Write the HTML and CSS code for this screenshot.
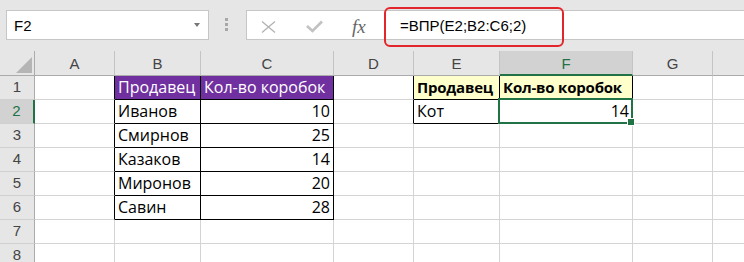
FILE: index.html
```html
<!DOCTYPE html>
<html lang="ru">
<head>
    <meta charset="UTF-8">
    <meta name="viewport" content="width=device-width, initial-scale=1.0">
    <title>ВПР</title>
    <link rel="stylesheet" href="styles.css">
</head>
<body>
    <div class="toolbar">
        <div class="namebox">
            <span class="name">F2</span>
            <span class="drop"></span>
        </div>
        <div class="grip"><i></i><i></i><i></i></div>
        <div class="formula">
            <svg class="ico-x" width="15" height="12" viewBox="0 0 15 12">
                <path d="M1 0.5 L14 11.5 M14 0.5 L1 11.5" stroke="#b0b0b0" stroke-width="1.2" fill="none"/>
            </svg>
            <svg class="ico-ok" width="17" height="13" viewBox="0 0 17 13">
                <path d="M1 6 L6.5 11 L16 1.5" stroke="#c2c2c2" stroke-width="2.6" fill="none"/>
            </svg>
            <span class="fx">fx</span>
            <span class="ftext">=ВПР(E2;B2:C6;2)</span>
            <div class="mark"></div>
        </div>
    </div>

    <div class="sheet">
        <!-- column headers -->
        <div class="c h corner">
            <svg width="16" height="16" viewBox="0 0 16 16"><polygon points="16,0 16,16 0,16" fill="#b5b5b5"/></svg>
        </div>
        <div class="c h">A</div>
        <div class="c h">B</div>
        <div class="c h">C</div>
        <div class="c h">D</div>
        <div class="c h">E</div>
        <div class="c h hsel">F</div>
        <div class="c h">G</div>
        <div class="c h"></div>

        <!-- row 1 -->
        <div class="c r">1</div>
        <div class="c bk-r"></div>
        <div class="c bk-r bk-b purple">Продавец</div>
        <div class="c bk-r bk-b purple">Кол-во коробок</div>
        <div class="c bk-r"></div>
        <div class="c bk-r bk-b yellow">Продавец</div>
        <div class="c bk-r bk-b yellow">Кол-во коробок</div>
        <div class="c"></div>
        <div class="c"></div>

        <!-- row 2 -->
        <div class="c r rsel">2</div>
        <div class="c bk-r"></div>
        <div class="c bk-r bk-b">Иванов</div>
        <div class="c bk-r bk-b num">10</div>
        <div class="c bk-r"></div>
        <div class="c bk-r bk-b">Кот</div>
        <div class="c bk-r bk-b num sel">14</div>
        <div class="c"></div>
        <div class="c"></div>

        <!-- row 3 -->
        <div class="c r">3</div>
        <div class="c bk-r"></div>
        <div class="c bk-r bk-b">Смирнов</div>
        <div class="c bk-r bk-b num">25</div>
        <div class="c"></div>
        <div class="c"></div>
        <div class="c"></div>
        <div class="c"></div>
        <div class="c"></div>

        <!-- row 4 -->
        <div class="c r">4</div>
        <div class="c bk-r"></div>
        <div class="c bk-r bk-b">Казаков</div>
        <div class="c bk-r bk-b num">14</div>
        <div class="c"></div>
        <div class="c"></div>
        <div class="c"></div>
        <div class="c"></div>
        <div class="c"></div>

        <!-- row 5 -->
        <div class="c r">5</div>
        <div class="c bk-r"></div>
        <div class="c bk-r bk-b">Миронов</div>
        <div class="c bk-r bk-b num">20</div>
        <div class="c"></div>
        <div class="c"></div>
        <div class="c"></div>
        <div class="c"></div>
        <div class="c"></div>

        <!-- row 6 -->
        <div class="c r">6</div>
        <div class="c bk-r"></div>
        <div class="c bk-r bk-b">Савин</div>
        <div class="c bk-r bk-b num">28</div>
        <div class="c"></div>
        <div class="c"></div>
        <div class="c"></div>
        <div class="c"></div>
        <div class="c"></div>

        <!-- row 7 -->
        <div class="c r">7</div>
        <div class="c"></div>
        <div class="c"></div>
        <div class="c"></div>
        <div class="c"></div>
        <div class="c"></div>
        <div class="c"></div>
        <div class="c"></div>
        <div class="c"></div>

        <!-- row 8 -->
        <div class="c r">8</div>
        <div class="c"></div>
        <div class="c"></div>
        <div class="c"></div>
        <div class="c"></div>
        <div class="c"></div>
        <div class="c"></div>
        <div class="c"></div>
        <div class="c"></div>
    </div>
</body>
</html>
```

FILE: styles.css
```css
body {
    margin: 0;
    height: 262px;
    overflow: hidden;
    background: #e6e6e6;
    font-family: "Liberation Sans", Arial, sans-serif;
    color: #000;
}

/* formula bar */
.toolbar {
    display: flex;
    align-items: flex-start;
    height: 51px;
    padding: 10px 0 0 6px;
    box-sizing: border-box;
}

.namebox {
    display: flex;
    align-items: center;
    justify-content: space-between;
    width: 203px;
    height: 30px;
    padding: 0 8px 0 7px;
    box-sizing: border-box;
    background: #fff;
    border: 1px solid #c6c6c6;
    font-size: 15px;
}

.drop {
    width: 0;
    height: 0;
    border-left: 3.5px solid transparent;
    border-right: 3.5px solid transparent;
    border-top: 4px solid #767676;
}

.grip {
    display: flex;
    flex-direction: column;
    gap: 2px;
    margin: 8px 0 0 16px;
}

.grip i {
    display: block;
    width: 3px;
    height: 3px;
    background: #a8a8a8;
}

.formula {
    position: relative;
    flex: 1;
    display: flex;
    align-items: center;
    height: 30px;
    margin-left: 18px;
    padding-top: 3px;
    box-sizing: border-box;
    background: #fff;
    border: 1px solid #c6c6c6;
    border-right: none;
}

.ico-x {
    margin-left: 14px;
}

.ico-ok {
    margin-left: 30px;
}

.fx {
    display: inline-block;
    width: 16px;
    margin-left: 29px;
    font-family: "Liberation Serif", "Times New Roman", serif;
    font-style: italic;
    font-size: 19px;
    color: #666;
}

.ftext {
    margin: -2px 0 0 32px;
    font-size: 15px;
}

.mark {
    position: absolute;
    left: 137px;
    top: -4px;
    width: 180px;
    height: 40px;
    box-sizing: border-box;
    border: 2px solid #e3262b;
    border-radius: 6px;
}

/* grid */
.sheet {
    display: grid;
    grid-template-columns: 35px 80px 86px 133px 80px 86px 133px 80px 80px;
    grid-template-rows: 25px repeat(8, 24px);
    overflow: hidden;
    background: #fff;
}

.c {
    box-sizing: border-box;
    border-right: 1px solid #d4d4d4;
    border-bottom: 1px solid #d4d4d4;
    padding: 0 3px;
    font-family: "Open Sans", "Liberation Sans", sans-serif;
    font-size: 16px;
    line-height: 23px;
    white-space: nowrap;
}

.h {
    background: #e6e6e6;
    border-right-color: #c4c4c4;
    border-bottom-color: #ababab;
    text-align: center;
    font-family: "Liberation Sans", Arial, sans-serif;
    font-size: 15px;
    color: #444;
    line-height: 26px;
}

.corner {
    display: flex;
    align-items: flex-end;
    justify-content: flex-end;
    padding: 0 2px 2px 0;
    border-right-color: #ababab;
}

.hsel {
    background: #d2d2d2;
    color: #217346;
    border-bottom: 2px solid #217346;
}

.r {
    background: #e6e6e6;
    border-right-color: #ababab;
    border-bottom-color: #d0d0d0;
    text-align: center;
    font-family: "Liberation Sans", Arial, sans-serif;
    font-size: 15px;
    color: #444;
    line-height: 22px;
}

.rsel {
    background: #d2d2d2;
    color: #217346;
    border-right: 2px solid #217346;
}

.bk-r {
    border-right-color: #000;
}

.bk-b {
    border-bottom-color: #000;
}

.purple {
    background: #7030a0;
    color: #fff;
}

.yellow {
    background: #ffffcc;
    font-weight: bold;
    font-size: 15px;
    letter-spacing: -0.2px;
}

.num {
    text-align: right;
}

.sel {
    position: relative;
}

.sel::after {
    content: "";
    position: absolute;
    left: -2px;
    top: -2px;
    right: -1px;
    bottom: -1px;
    border: 2px solid #217346;
}

.sel::before {
    content: "";
    position: absolute;
    right: -2px;
    bottom: -2px;
    width: 6px;
    height: 6px;
    background: #217346;
    box-shadow: 0 0 0 1px #fff;
    z-index: 1;
}
```
